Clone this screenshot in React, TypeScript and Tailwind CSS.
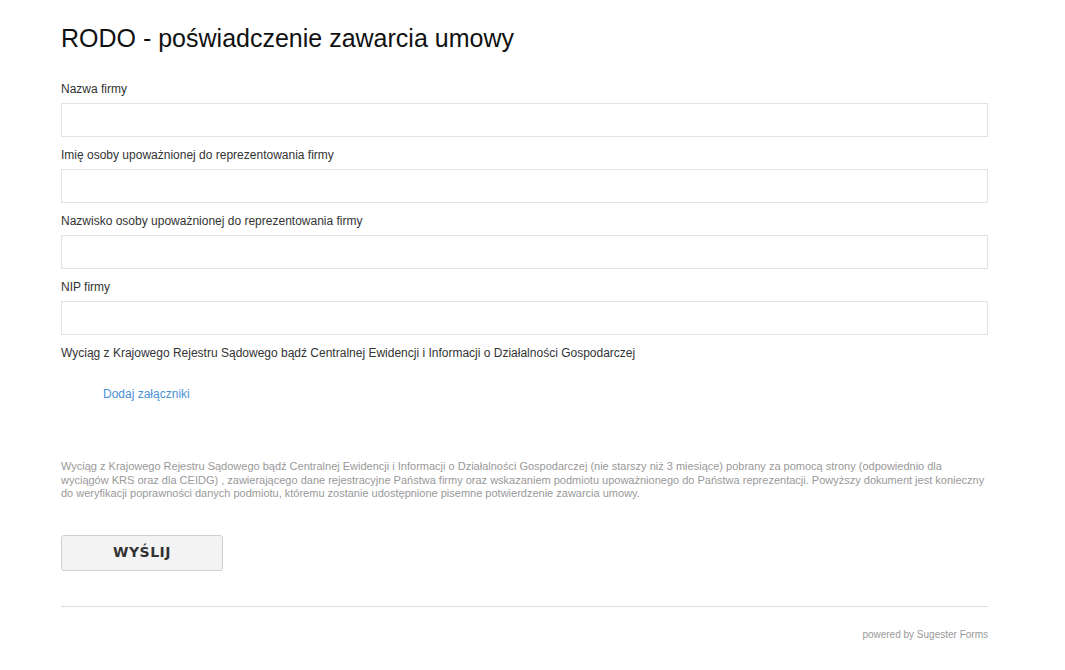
import React from 'react';

const fields = [
  'Nazwa firmy',
  'Imię osoby upoważnionej do reprezentowania firmy',
  'Nazwisko osoby upoważnionej do reprezentowania firmy',
  'NIP firmy',
];

const App: React.FC = () => {
  return (
    <div className="min-h-screen bg-white font-['Liberation_Sans',Arial,sans-serif] text-[#333]">
      <div className="ml-[61px] w-[927px] pt-[23px]">
        <h1 className="text-[25px] leading-[30px] text-[#111] mb-[28px]">RODO - poświadczenie zawarcia umowy</h1>

        {fields.map((label) => (
          <div key={label} className="mb-[10px]">
            <label className="block text-[12px] leading-[16px] mb-[6px]">{label}</label>
            <input type="text" className="block w-full h-[34px] border border-[#e3e3e3] bg-white outline-none" />
          </div>
        ))}

        <div className="text-[12px] leading-[16px]">
          Wyciąg z Krajowego Rejestru Sądowego bądź Centralnej Ewidencji i Informacji o Działalności Gospodarczej
        </div>
        <div className="pl-[42px] pt-[20px]">
          <a href="#" className="text-[12px] leading-[16px] text-[#4a8fd6]">Dodaj załączniki</a>
        </div>

        <p className="mt-[55px] text-[11px] leading-[13.5px] text-[#999]">
          Wyciąg z Krajowego Rejestru Sądowego bądź Centralnej Ewidencji i Informacji o Działalności Gospodarczej (nie starszy niż 3 miesiące) pobrany za pomocą strony (odpowiednio dla wyciągów KRS oraz dla CEIDG) , zawierającego dane rejestracyjne Państwa firmy oraz wskazaniem podmiotu upoważnionego do Państwa reprezentacji. Powyższy dokument jest konieczny do weryfikacji poprawności danych podmiotu, któremu zostanie udostępnione pisemne potwierdzenie zawarcia umowy.
        </p>

        <button className="mt-[34px] w-[162px] h-[36px] bg-[#f3f3f3] border border-[#cfcfcf] rounded-[3px] font-['DejaVu_Sans',Verdana,sans-serif] font-bold text-[14px] tracking-[0.5px] text-[#333]">
          WYŚLIJ
        </button>

        <div className="mt-[35px] border-t border-[#ddd]" />
        <div className="pt-[22px] text-right text-[10px] leading-[12px] text-[#999]">powered by Sugester Forms</div>
      </div>
    </div>
  );
};

export default App;
